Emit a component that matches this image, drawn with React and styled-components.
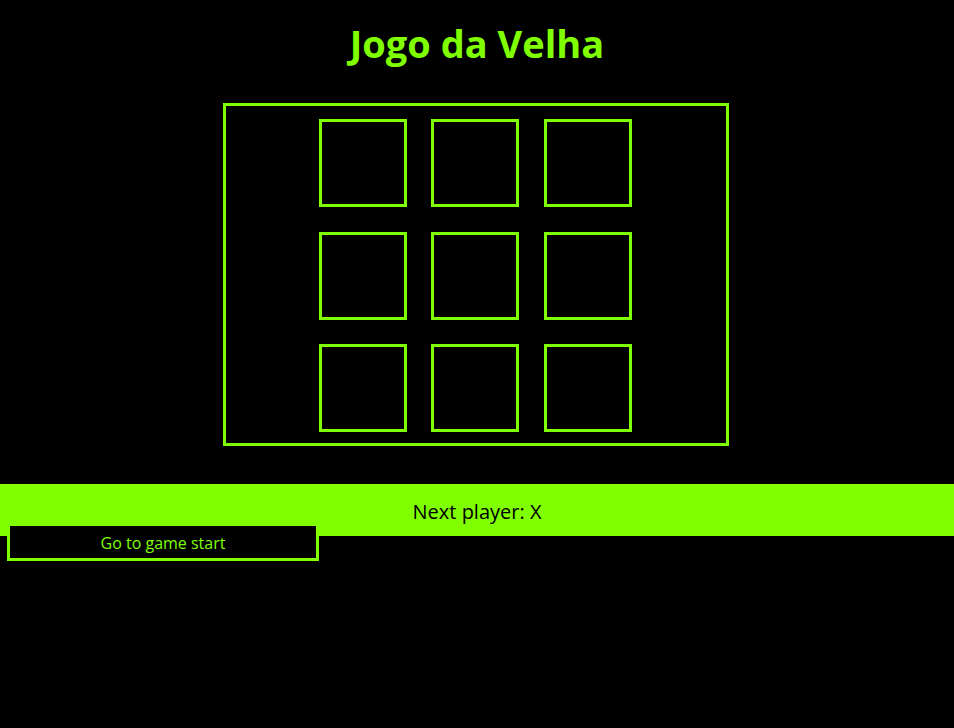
import styled, { createGlobalStyle } from "styled-components";

const GREEN = "#7fff00";

const GlobalStyle = createGlobalStyle`
  body {
    margin: 0;
    background: #000;
    font-family: "Open Sans", "Noto Sans", sans-serif;
  }
`;

export default function App() {
  const squares = Array(9).fill(null);

  return (
    <Page>
      <GlobalStyle />
      <Title>Jogo da Velha</Title>
      <Board>
        <Grid>
          {squares.map((value, i) => (
            <Square key={i}>{value}</Square>
          ))}
        </Grid>
      </Board>
      <Status>Next player: X</Status>
      <MoveButton>Go to game start</MoveButton>
    </Page>
  );
}

const Page = styled.div`
  display: flex;
  flex-direction: column;
  min-height: 728px;
`;

const Title = styled.h1`
  margin: 15px 0 0;
  text-align: center;
  font-size: 38px;
  line-height: 56px;
  font-weight: 700;
  color: ${GREEN};
`;

const Board = styled.div`
  box-sizing: border-box;
  align-self: center;
  width: 506px;
  height: 343px;
  margin: 32px 2px 0 0;
  padding-top: 13px;
  border: 3px solid ${GREEN};
  display: flex;
  justify-content: center;
`;

const Grid = styled.div`
  display: grid;
  grid-template-columns: repeat(3, 88px);
  grid-auto-rows: 88px;
  gap: 24.5px;
  transform: translateX(-1px);
`;

const Square = styled.button`
  box-sizing: border-box;
  background: #000;
  border: 3px solid ${GREEN};
  color: ${GREEN};
  font-size: 40px;
  padding: 0;
`;

const Status = styled.div`
  margin-top: 38px;
  height: 52px;
  background: ${GREEN};
  color: #000;
  font-size: 20px;
  display: flex;
  align-items: center;
  justify-content: center;
  padding-top: 2px;
  box-sizing: border-box;
`;

const MoveButton = styled.button`
  box-sizing: border-box;
  align-self: flex-start;
  width: 312px;
  height: 38px;
  margin: -13px 0 0 7px;
  background: #000;
  border: 3px solid ${GREEN};
  color: ${GREEN};
  font-family: "Open Sans", "Noto Sans", sans-serif;
  font-size: 16px;
  padding: 2px 0 0;
`;
